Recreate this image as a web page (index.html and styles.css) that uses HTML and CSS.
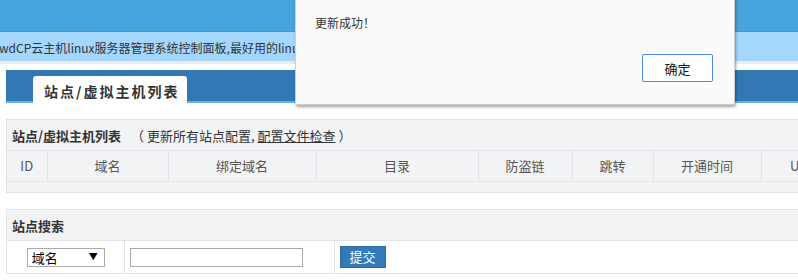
FILE: index.html
```html
<!DOCTYPE html>
<html lang="zh-CN">
<head>
<meta charset="utf-8">
<title>站点/虚拟主机列表</title>
<link rel="stylesheet" href="styles.css">
</head>
<body>
<div class="topbar"></div>
<div class="notice"><div class="marquee">wdCP云主机linux服务器管理系统控制面板,最好用的linux服务器管理系统</div></div>
<div class="sep"></div>
<div class="page">
  <div class="tabbar"><div class="tab">站点/虚拟主机列表</div></div>

  <div class="panel">
    <div class="panel-head"><b>站点/虚拟主机列表</b><span class="links">（ <a class="plain">更新所有站点配置</a>, <a class="ul">配置文件检查</a> ）</span></div>
    <table class="grid">
      <colgroup>
        <col class="c-id"><col class="c-domain"><col class="c-bind"><col class="c-dir"><col class="c-anti"><col class="c-jump"><col class="c-time"><col class="c-uid"><col class="c-state"><col class="c-op">
      </colgroup>
      <thead>
        <tr><th>ID</th><th>域名</th><th>绑定域名</th><th>目录</th><th>防盗链</th><th>跳转</th><th>开通时间</th><th>UID</th><th>状态</th><th>操作</th></tr>
      </thead>
      <tbody>
        <tr class="empty"><td colspan="10"></td></tr>
      </tbody>
    </table>
  </div>

  <div class="panel">
    <div class="panel-head"><b>站点搜索</b></div>
    <table class="search">
      <colgroup><col class="s1"><col class="s2"><col class="s3"></colgroup>
      <tr>
        <td class="center"><span class="select-wrap"><select class="sel"><option>域名</option></select></span></td>
        <td><input class="txt" type="text"></td>
        <td><button class="submit" type="button">提交</button></td>
      </tr>
    </table>
  </div>
</div>

<div class="dialog">
  <div class="msg">更新成功！</div>
  <div class="actions"><button class="ok" type="button">确定</button></div>
</div>
</body>
</html>
```

FILE: styles.css
```css
html, body {
  margin: 0;
  padding: 0;
  overflow: hidden;
  background: #fff;
}
body {
  font-family: "Noto Sans CJK SC", "Noto Sans", sans-serif;
  font-size: 13px;
  color: #333;
  position: relative;
  width: 1200px;
}
.topbar {
  height: 31px;
  background: #48a4dc;
  border-bottom: 1px solid #3f97cf;
}
.notice {
  height: 29px;
  background: #a4d7fd;
  overflow: hidden;
  white-space: nowrap;
}
.marquee {
  font-size: 12px;
  line-height: 31px;
  color: #333;
  margin-left: -1px;
}
.sep {
  height: 3px;
  background: #ececec;
}
.page {
  padding: 6px 0 0 6px;
}
.tabbar {
  height: 31px;
  background: #3278b4;
  border-bottom: 2px solid #5cb3e3;
  display: flex;
  align-items: flex-end;
  padding-left: 27px;
}
.tab {
  background: #fff;
  height: 27px;
  margin-bottom: -2px;
  padding: 0 8px 0 11px;
  border-radius: 3px 3px 0 0;
  font-weight: bold;
  font-size: 14px;
  letter-spacing: 2px;
  line-height: 30px;
  color: #333;
  white-space: nowrap;
}
.panel {
  margin-top: 16px;
  border: 1px solid #e1e3e6;
  border-right: none;
  background: #f2f3f5;
}
.panel-head {
  height: 30px;
  line-height: 31px;
  padding-left: 5px;
  border-bottom: 1px solid #e1e3e6;
  font-size: 13px;
  color: #333;
  white-space: nowrap;
}
.panel-head b {
  font-weight: bold;
}
.links {
  margin-left: 10px;
}
.links a {
  color: #333;
}
.links .plain {
  text-decoration: none;
}
.links .ul {
  text-decoration: underline;
}
.grid, .search {
  border-collapse: collapse;
  table-layout: fixed;
  width: 100%;
}
.c-id { width: 40px; }
.c-domain { width: 121px; }
.c-bind { width: 148px; }
.c-dir { width: 162px; }
.c-anti { width: 94px; }
.c-jump { width: 81px; }
.c-time { width: 108px; }
.c-uid { width: 80px; }
.c-state { width: 90px; }
.grid th {
  height: 30px;
  padding: 0;
  font-weight: normal;
  font-size: 13px;
  color: #555;
  text-align: center;
  border-right: 1px solid #e1e3e6;
  border-bottom: 1px solid #e1e3e6;
  line-height: 30px;
  white-space: nowrap;
}
.grid .empty td {
  height: 10px;
  padding: 0;
}
.s1 { width: 117px; }
.s2 { width: 210px; }
.search td {
  background: #fff;
  height: 32px;
  padding: 0 0 0 5px;
  border-right: 1px solid #e1e3e6;
  vertical-align: middle;
}
.search td.center {
  text-align: center;
  padding: 0;
}
.select-wrap {
  position: relative;
  display: inline-block;
  vertical-align: middle;
}
.select-wrap::after {
  content: "▼";
  position: absolute;
  right: 7px;
  top: 3px;
  font-size: 9px;
  line-height: 12px;
  color: #000;
  pointer-events: none;
}
.sel {
  -webkit-appearance: none;
  appearance: none;
  width: 78px;
  height: 19px;
  margin: 0 0 0 1px;
  padding: 0 0 0 4px;
  border: 1px solid #a9a9a9;
  border-radius: 0;
  background: #fff;
  font-family: "Noto Sans CJK SC", sans-serif;
  font-size: 13px;
  line-height: 17px;
  color: #000;
  display: block;
}
.txt {
  display: block;
  width: 173px;
  height: 19px;
  box-sizing: border-box;
  margin: 0;
  border: 1px solid #a9a9a9;
  padding: 0 3px;
  background: #fff;
}
.submit {
  display: block;
  width: 46px;
  height: 22px;
  margin: 0;
  padding: 0;
  background: #337ab7;
  border: 1px solid #2e6da4;
  color: #fff;
  font-family: "Noto Sans CJK SC", sans-serif;
  font-size: 13px;
  line-height: 20px;
}
.dialog {
  position: absolute;
  left: 295px;
  top: -10px;
  width: 438px;
  height: 113px;
  background: #fafafa;
  border: 1px solid #cfcfcf;
  border-radius: 2px;
  box-shadow: 1px 2px 3px rgba(0, 0, 0, 0.35);
}
.msg {
  padding: 22px 20px 0 19px;
  font-size: 12px;
  line-height: 20px;
  color: #333;
}
.actions {
  display: flex;
  justify-content: flex-end;
  padding-right: 21px;
  margin-top: 21px;
}
.ok {
  width: 71px;
  height: 28px;
  box-sizing: border-box;
  background: #fff;
  border: 1px solid #4a8af0;
  border-radius: 2px;
  font-family: "Noto Sans CJK SC", sans-serif;
  font-size: 13px;
  color: #111;
  padding: 0;
}
```
